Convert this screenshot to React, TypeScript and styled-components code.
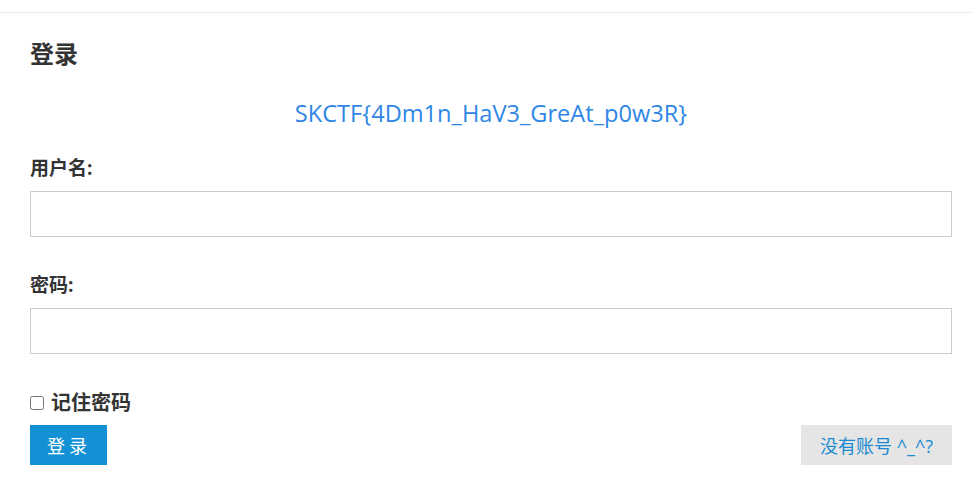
import React from "react";
import styled, { createGlobalStyle } from "styled-components";

const Global = createGlobalStyle`
  html, body { margin: 0; padding: 0; background: #fff; }
  body { font-family: "Open Sans", "Noto Sans CJK SC", sans-serif; color: #333; }
  * { box-sizing: border-box; }
`;

const TopBar = styled.div`
  height: 13px;
  border-bottom: 1px solid #e7e7e7;
`;

const Panel = styled.form`
  padding: 24px 19px 0 30px;
  display: flex;
  flex-direction: column;
`;

const Title = styled.h2`
  margin: 0;
  font-size: 24px;
  line-height: 34px;
  font-weight: 700;
  color: #333;
`;

const Flag = styled.div`
  margin-top: 27px;
  text-align: center;
  font-size: 23.6px;
  line-height: 30px;
  color: #2f86e6;
`;

const Field = styled.div<{ $gap: number }>`
  margin-top: ${(p) => p.$gap}px;
  display: flex;
  flex-direction: column;
`;

const Label = styled.label`
  font-size: 19px;
  line-height: 26px;
  font-weight: 700;
  color: #333;
  margin-bottom: 10px;
`;

const Input = styled.input`
  height: 46px;
  width: 100%;
  border: 1px solid #ccc;
  padding: 0 10px;
  font-size: 16px;
  outline: none;
`;

const Remember = styled.label`
  margin-top: 36px;
  display: flex;
  align-items: center;
  gap: 7px;
  font-size: 20px;
  font-weight: 700;
  line-height: 26px;
  color: #333;
`;

const Check = styled.input`
  margin: 0;
  width: 14px;
  height: 14px;
`;

const Actions = styled.div`
  margin-top: 9px;
  display: flex;
  justify-content: space-between;
`;

const Button = styled.button<{ $primary?: boolean }>`
  height: 40px;
  border: none;
  border-radius: 0;
  font-family: "Open Sans", "Noto Sans CJK SC", sans-serif;
  font-size: 18px;
  padding: ${(p) => (p.$primary ? "0 16px 0 17px" : "0 19px")};
  background: ${(p) => (p.$primary ? "#1391d4" : "#e5e5e5")};
  color: ${(p) => (p.$primary ? "#fff" : "#1a8bd3")};
  letter-spacing: ${(p) => (p.$primary ? "4px" : "0")};
  cursor: pointer;
`;

export default function App() {
  return (
    <>
      <Global />
      <TopBar />
      <Panel onSubmit={(e) => e.preventDefault()}>
        <Title>登录</Title>
        <Flag>SKCTF{"{"}4Dm1n_HaV3_GreAt_p0w3R{"}"}</Flag>
        <Field $gap={27}>
          <Label>用户名:</Label>
          <Input type="text" />
        </Field>
        <Field $gap={35}>
          <Label>密码:</Label>
          <Input type="password" />
        </Field>
        <Remember>
          <Check type="checkbox" />
          记住密码
        </Remember>
        <Actions>
          <Button $primary type="submit">登录</Button>
          <Button type="button">没有账号 ^_^?</Button>
        </Actions>
      </Panel>
    </>
  );
}
